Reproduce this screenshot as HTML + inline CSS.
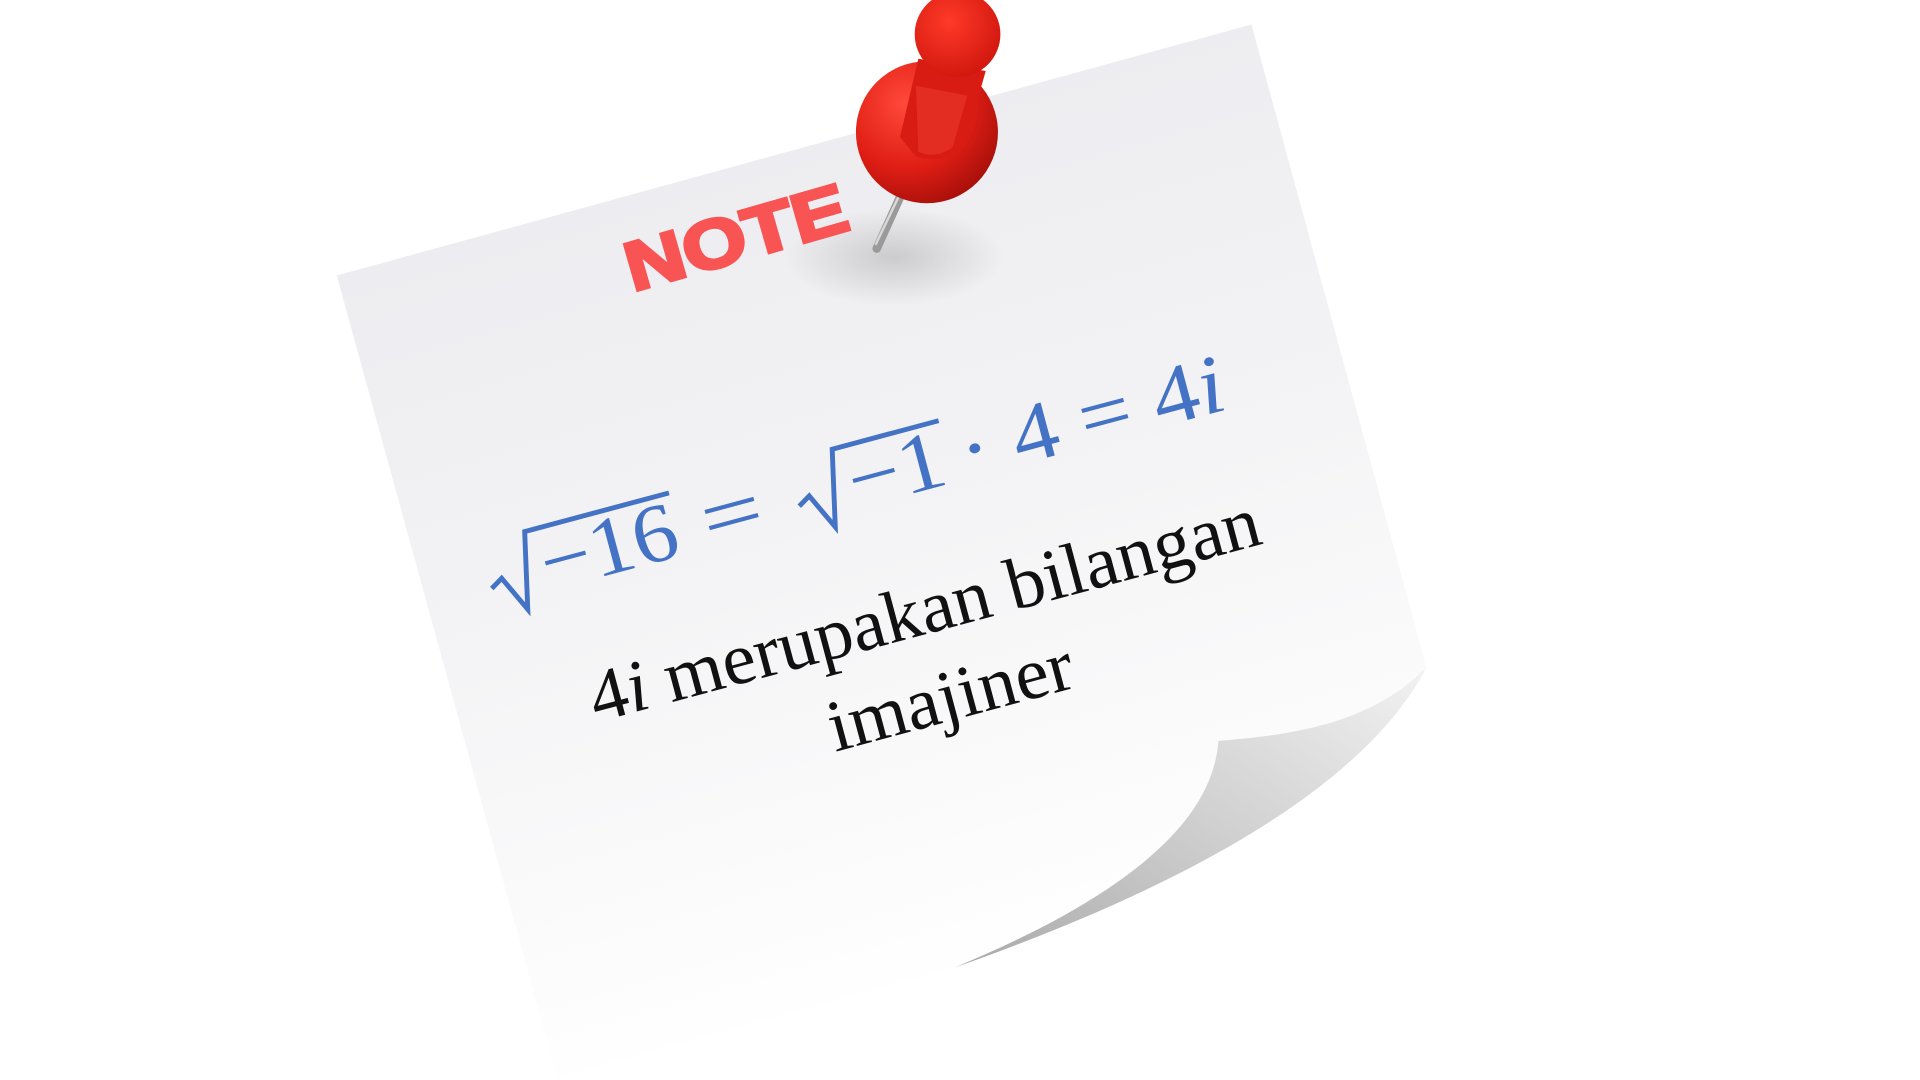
<!DOCTYPE html>
<html><head><meta charset="utf-8"><style>
html,body{margin:0;padding:0;background:#fff;width:1920px;height:1080px;overflow:hidden}
</style></head><body>
<svg width="1920" height="1080" viewBox="0 0 1568 882" xmlns="http://www.w3.org/2000/svg">
<defs>
<linearGradient id="paper" x1="0" y1="0" x2="0.3" y2="1">
<stop offset="0" stop-color="#e9e9ee"/><stop offset="0.55" stop-color="#f3f3f5"/><stop offset="1" stop-color="#ffffff"/>
</linearGradient>
<linearGradient id="curl" x1="1" y1="0" x2="0" y2="1">
<stop offset="0" stop-color="#f2f2f2"/><stop offset="0.5" stop-color="#cfcfcf"/><stop offset="1" stop-color="#a9a9a9"/>
</linearGradient>
<radialGradient id="shadow" cx="0.5" cy="0.5" r="0.5">
<stop offset="0" stop-color="#000" stop-opacity="0.15"/><stop offset="1" stop-color="#000" stop-opacity="0"/>
</radialGradient>
<radialGradient id="head" cx="0.35" cy="0.3" r="0.75">
<stop offset="0" stop-color="#ff4a3a"/><stop offset="0.6" stop-color="#e01e15"/><stop offset="1" stop-color="#a8100a"/>
</radialGradient>
<radialGradient id="knob" cx="0.4" cy="0.35" r="0.7">
<stop offset="0" stop-color="#ff3a28"/><stop offset="1" stop-color="#d0160e"/>
</radialGradient>
</defs>
<path d="M275,225 L1022,20 L1165,545 C1120,590 1060,600 995,605 C990,680 900,740 780,790 L455,880 Z" fill="url(#paper)"/>
<path d="M1165,545 C1120,590 1060,600 995,605 C990,680 900,740 780,790 C950,730 1110,650 1165,545 Z" fill="url(#curl)"/>
<ellipse cx="730" cy="210" rx="90" ry="40" fill="url(#shadow)"/>
<line x1="740" y1="150" x2="716" y2="203" stroke="#9a9a9a" stroke-width="7" stroke-linecap="round"/>
<line x1="738" y1="152" x2="715" y2="200" stroke="#d8d8d8" stroke-width="2"/>
<circle cx="757" cy="108" r="58" fill="url(#head)"/>
<path d="M750,48 L805,58 L788,118 Q775,135 748,128 L735,112 Z" fill="#d81c14"/>
<path d="M748,70 L790,78 L778,120 Q765,130 750,124 Z" fill="#e8352a" opacity="0.7"/>
<circle cx="782" cy="28" r="35" fill="url(#knob)"/>
<text transform="translate(517,238) rotate(-16)" font-family="Liberation Sans, sans-serif" font-weight="900" font-size="56" fill="#f95454" stroke="#f95454" stroke-width="3" textLength="186" lengthAdjust="spacingAndGlyphs">NOTE</text>
<g transform="translate(414,496) rotate(-15)" fill="#4472c4" font-family="Liberation Serif, serif" font-size="68">
<path d="M-8,-18 L2,-24 L16,6 L30,-56 L152,-56" fill="none" stroke="#4472c4" stroke-width="4"/>
<text x="36" y="-4" textLength="114" lengthAdjust="spacingAndGlyphs">−16</text>
<text x="172" y="-4" textLength="50" lengthAdjust="spacingAndGlyphs">=</text>
<path d="M252,-18 L262,-24 L276,6 L290,-56 L380,-56" fill="none" stroke="#4472c4" stroke-width="4"/>
<text x="296" y="-4" textLength="80" lengthAdjust="spacingAndGlyphs">−1</text>
<text x="390" y="-4" textLength="222" lengthAdjust="spacingAndGlyphs">· 4 = 4<tspan font-style="italic">i</tspan></text>
</g>
<text transform="translate(487,590) rotate(-15)" font-family="Liberation Serif, serif" font-size="60" fill="#111" textLength="565" lengthAdjust="spacingAndGlyphs">4<tspan font-style="italic">i</tspan> merupakan bilangan</text>
<text transform="translate(682,614) rotate(-15)" font-family="Liberation Serif, serif" font-size="60" fill="#111" textLength="205" lengthAdjust="spacingAndGlyphs">imajiner</text>
</svg>
</body></html>
